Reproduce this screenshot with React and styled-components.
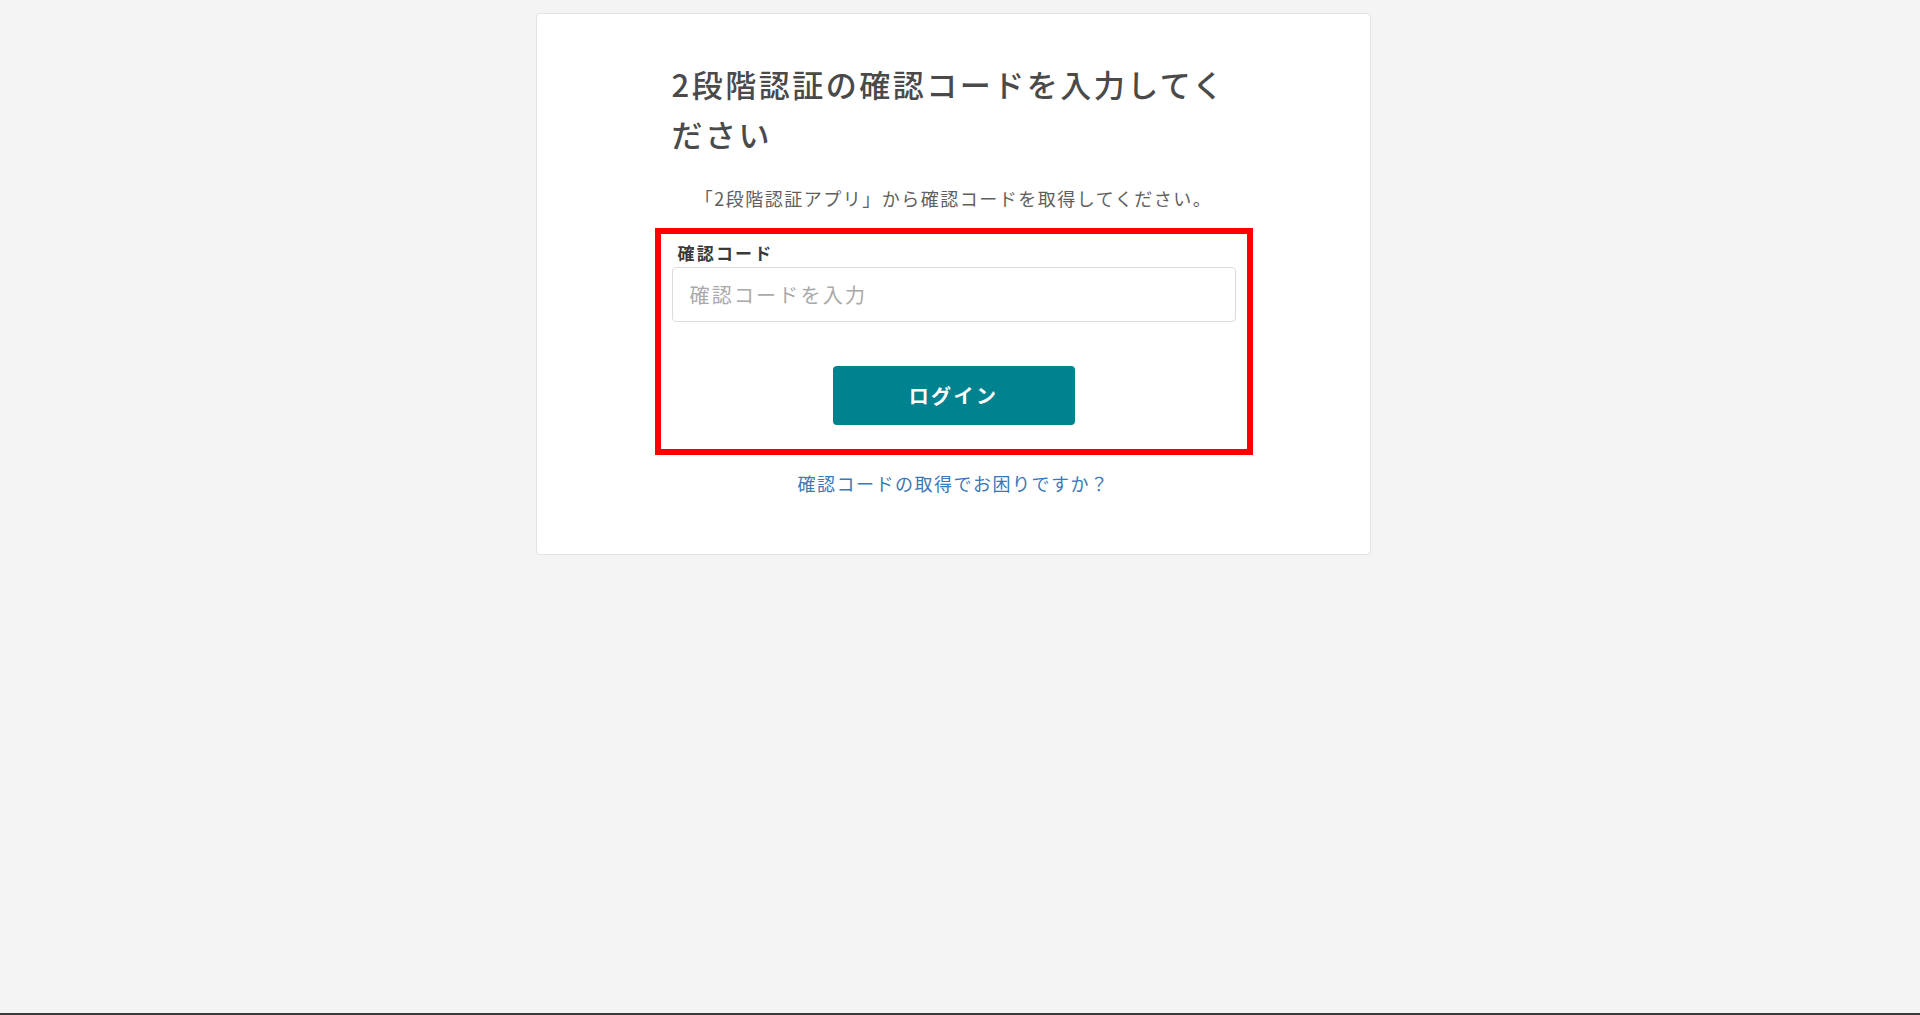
import React from "react";
import styled, { createGlobalStyle } from "styled-components";

const GlobalStyle = createGlobalStyle`
  html, body {
    margin: 0;
    padding: 0;
    background: #f4f4f4;
  }
  body {
    font-family: "Noto Sans CJK JP", "Noto Sans", sans-serif;
  }
  * { box-sizing: border-box; }
`;

const Page = styled.div`
  min-height: 100vh;
  display: flex;
  justify-content: center;
  align-items: flex-start;
  padding: 13px 13px 0 0;
  border-bottom: 2px solid #3a3a3a;
`;

const Card = styled.main`
  width: 835px;
  background: #fff;
  border: 1px solid #e2e2e2;
  border-radius: 4px;
  padding: 45px 0 59px;
  display: flex;
  justify-content: center;
`;

const Column = styled.div`
  width: 564px;
  display: flex;
  flex-direction: column;
  align-items: stretch;
`;

const Title = styled.h1`
  margin: 0 0 25px;
  font-size: 31px;
  font-weight: 500;
  line-height: 50px;
  letter-spacing: 2.5px;
  color: #4a4a4a;
`;

const Lead = styled.p`
  margin: 0 0 33px;
  font-size: 18px;
  line-height: 28px;
  letter-spacing: 1.5px;
  color: #5f5f5f;
  text-align: center;
`;

const Form = styled.form`
  display: flex;
  flex-direction: column;
  padding-bottom: 13px;
  outline: 6px solid #ff0000;
  outline-offset: 11px;
`;

const Label = styled.label`
  font-size: 17px;
  font-weight: 700;
  line-height: 16px;
  letter-spacing: 2.2px;
  color: #3a3a3a;
  margin: 0 0 6px 6px;
`;

const Input = styled.input`
  height: 55px;
  width: 100%;
  border: 1px solid #dcdcdc;
  border-radius: 4px;
  padding: 0 17px;
  font-family: inherit;
  font-size: 20px;
  letter-spacing: 2.2px;
  color: #333;
  background: #fff;
  outline: none;
  &::placeholder {
    color: #a9a9a9;
  }
`;

const Submit = styled.button`
  align-self: center;
  margin-top: 44px;
  width: 242px;
  height: 59px;
  border: none;
  border-radius: 4px;
  background: #00838f;
  color: #fff;
  font-family: inherit;
  font-size: 20px;
  font-weight: 700;
  letter-spacing: 2.4px;
  cursor: pointer;
`;

const HelpLink = styled.a`
  margin-top: 33px;
  align-self: center;
  font-size: 18px;
  line-height: 24px;
  letter-spacing: 1.5px;
  color: #3a78b6;
  text-decoration: none;
`;

export default function App() {
  return (
    <>
      <GlobalStyle />
      <Page>
        <Card>
          <Column>
            <Title>2段階認証の確認コードを入力してください</Title>
            <Lead>「2段階認証アプリ」から確認コードを取得してください。</Lead>
            <Form onSubmit={(e) => e.preventDefault()}>
              <Label htmlFor="code">確認コード</Label>
              <Input id="code" type="text" placeholder="確認コードを入力" />
              <Submit type="submit">ログイン</Submit>
            </Form>
            <HelpLink href="#">確認コードの取得でお困りですか？</HelpLink>
          </Column>
        </Card>
      </Page>
    </>
  );
}
